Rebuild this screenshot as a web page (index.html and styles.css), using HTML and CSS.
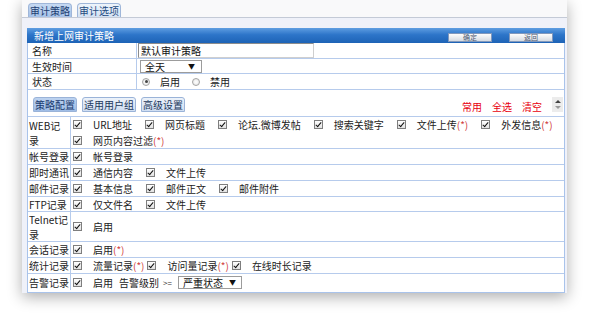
FILE: index.html
```html
<!DOCTYPE html>
<html lang="zh-CN">
<head>
<meta charset="utf-8">
<title>审计策略</title>
<link rel="stylesheet" href="styles.css">
</head>
<body>
<div class="stage">
  <div class="window">
    <div class="tabbar">
      <span class="tab active">审计策略</span>
      <span class="tab">审计选项</span>
    </div>
    <div class="panel">
      <div class="head">
        <span class="title">新增上网审计策略</span>
        <span class="btns"><span class="btn">确定</span><span class="btn">返回</span></span>
      </div>
      <div class="form">
        <div class="frow r1"><div class="flabel">名称</div><div class="fval"><span class="input">默认审计策略</span></div></div>
        <div class="frow r2"><div class="flabel">生效时间</div><div class="fval"><span class="select sel1"><span>全天</span><span class="arrow">▼</span></span></div></div>
        <div class="frow r3"><div class="flabel">状态</div><div class="fval">
          <span class="radio checked"></span><span class="rtext">启用</span>
          <span class="radio"></span><span class="rtext">禁用</span>
        </div></div>
      </div>
      <div class="subbar">
        <div class="subtabs">
          <span class="stab active">策略配置</span>
          <span class="stab">适用用户组</span>
          <span class="stab">高级设置</span>
        </div>
        <div class="links"><span>常用</span><span>全选</span><span>清空</span></div>
        <div class="spin"><span class="up"></span><span class="down"></span></div>
      </div>
      <div class="cfg">
        <div class="crow tall">
          <div class="clabel">WEB记录</div>
          <div class="cval">
            <div class="line">
              <span class="item"><span class="cb"></span>URL地址</span>
              <span class="item"><span class="cb"></span>网页标题</span>
              <span class="item"><span class="cb"></span>论坛.微博发帖</span>
              <span class="item"><span class="cb"></span>搜索关键字</span>
              <span class="item"><span class="cb"></span>文件上传<span class="star">(*)</span></span>
              <span class="item"><span class="cb"></span>外发信息<span class="star">(*)</span></span>
            </div>
            <div class="line">
              <span class="item"><span class="cb"></span>网页内容过滤<span class="star">(*)</span></span>
            </div>
          </div>
        </div>
        <div class="crow">
          <div class="clabel">帐号登录</div>
          <div class="cval"><div class="line"><span class="item"><span class="cb"></span>帐号登录</span></div></div>
        </div>
        <div class="crow">
          <div class="clabel">即时通讯</div>
          <div class="cval"><div class="line">
            <span class="item"><span class="cb"></span>通信内容</span>
            <span class="item"><span class="cb"></span>文件上传</span>
          </div></div>
        </div>
        <div class="crow">
          <div class="clabel">邮件记录</div>
          <div class="cval"><div class="line">
            <span class="item"><span class="cb"></span>基本信息</span>
            <span class="item"><span class="cb"></span>邮件正文</span>
            <span class="item"><span class="cb"></span>邮件附件</span>
          </div></div>
        </div>
        <div class="crow short">
          <div class="clabel">FTP记录</div>
          <div class="cval"><div class="line">
            <span class="item"><span class="cb"></span>仅文件名</span>
            <span class="item"><span class="cb"></span>文件上传</span>
          </div></div>
        </div>
        <div class="crow tel">
          <div class="clabel">Telnet记录</div>
          <div class="cval"><div class="line"><span class="item"><span class="cb"></span>启用</span></div></div>
        </div>
        <div class="crow">
          <div class="clabel">会话记录</div>
          <div class="cval"><div class="line"><span class="item"><span class="cb"></span>启用<span class="star">(*)</span></span></div></div>
        </div>
        <div class="crow">
          <div class="clabel">统计记录</div>
          <div class="cval"><div class="line tight">
            <span class="item"><span class="cb"></span>流量记录<span class="star">(*)</span></span>
            <span class="item"><span class="cb"></span>访问量记录<span class="star">(*)</span></span>
            <span class="item"><span class="cb"></span>在线时长记录</span>
          </div></div>
        </div>
        <div class="crow last">
          <div class="clabel">告警记录</div>
          <div class="cval"><div class="line">
            <span class="item alarm"><span class="cb"></span>启用</span>
            <span class="lvl">告警级别</span>
            <span class="ge">&gt;=</span>
            <span class="select sel2"><span>严重状态</span><span class="arrow">▼</span></span>
          </div></div>
        </div>
      </div>
    </div>
  </div>
</div>
</body>
</html>
```
FILE: styles.css
```css
* { box-sizing: border-box; }
html, body { margin: 0; padding: 0; }
body {
  width: 590px;
  height: 315px;
  overflow: hidden;
  background: #fff;
  font-family: "Noto Sans CJK SC", "Liberation Sans", sans-serif;
  font-size: 10px;
  line-height: 15px;
  color: #222;
}
.stage { display: flex; padding-left: 22px; height: 315px; }
.window {
  width: 545px;
  height: 293px;
  flex: none;
  background: #eff1f9;
  box-shadow: 0 4px 14px rgba(0, 0, 0, 0.32);
  display: flex;
  flex-direction: column;
}
.tabbar {
  height: 18px;
  flex: none;
  border-bottom: 1px solid #c4cad6;
  background: #f9f9fa;
  display: flex;
  align-items: flex-end;
  gap: 5px;
  padding-left: 6px;
}
.tab {
  height: 14px;
  padding: 0 1px;
  border: 1px solid #9fb6d9;
  border-bottom: none;
  border-radius: 4px 4px 0 0;
  background: linear-gradient(#eef4fb, #d3e1f3);
  color: #244a80;
  line-height: 13px;
}
.tab.active { background: linear-gradient(#c6d9f2, #a6c2e8); color: #1d3f73; }

.panel {
  margin: 10px 2px 0 5px;
  flex: 1;
  min-height: 0;
  background: #fff;
  border-left: 1px solid #a9c3ea;
  border-right: 1px solid #a9c3ea;
  border-bottom: 1px solid #a9c3ea;
  display: flex;
  flex-direction: column;
}
.head {
  height: 15px;
  flex: none;
  margin: 0 -1px;
  background: linear-gradient(#5e9de1, #2d75c9 45%, #1d63b6);
  display: flex;
  align-items: center;
  color: #fff;
  padding-left: 7px;
}
.title { flex: 1; line-height: 15px; }
.btns { display: flex; gap: 17px; margin-right: 12px; margin-top: 3px; }
.btn {
  width: 44px;
  height: 9px;
  border: 1px solid #8198bc;
  background: linear-gradient(#fdfdfd, #d6dbe2);
  font-size: 7px;
  line-height: 7px;
  text-align: center;
  color: #4d5870;
}

.frow { display: flex; border-bottom: 1px solid #b6cbec; }
.r1 { height: 16px; }
.r2 { height: 15px; }
.r3 { height: 16px; }
.flabel { width: 109px; flex: none; border-right: 1px solid #b6cbec; padding-left: 4px; line-height: 15px; }
.fval { flex: 1; min-width: 0; display: flex; align-items: center; padding-left: 1px; }
.input {
  width: 176px;
  height: 15px;
  border: 1px solid;
  border-color: #8c8c8c #cfcfcf #cfcfcf #8c8c8c;
  padding-left: 2px;
  line-height: 13px;
  color: #111;
}
.select {
  height: 13px;
  border: 1px solid #9c9c9c;
  display: flex;
  justify-content: space-between;
  align-items: center;
  line-height: 11px;
  background: #fff;
  color: #111;
}
.sel1 { width: 62px; margin-left: 2px; padding: 0 6px 0 4px; }
.arrow { font-size: 7px; color: #111; }
.radio {
  width: 8px;
  height: 8px;
  border: 1px solid #a4a4a4;
  border-radius: 50%;
  background: radial-gradient(#fff, #e2e2e2);
  margin-left: 4px;
  display: flex;
  align-items: center;
  justify-content: center;
}
.radio.checked::before {
  content: "";
  width: 3px;
  height: 3px;
  border-radius: 50%;
  background: #444;
}
.rtext { margin-left: 10px; margin-right: 8px; }

.subbar { height: 26px; flex: none; display: flex; align-items: flex-start; padding-top: 7px; }
.subtabs { display: flex; gap: 5px; margin-left: 5px; }
.stab {
  height: 15px;
  border: 1px solid #9ab3d8;
  border-radius: 3px 3px 0 0;
  background: linear-gradient(#ecf2fa, #cfdef2);
  padding: 0 1px;
  line-height: 13px;
  color: #22385c;
}
.stab.active { background: linear-gradient(#bcd2f0, #9fbde6); color: #1b3c70; }
.links {
  margin-left: auto;
  display: flex;
  gap: 10px;
  color: #e8000e;
  padding-top: 2px;
}
.spin {
  width: 11px;
  height: 15px;
  margin: 0 1px 0 10px;
  background: #ececec;
  display: flex;
  flex-direction: column;
  align-items: center;
  justify-content: center;
  gap: 3px;
}
.up { width: 0; height: 0; border-left: 3px solid transparent; border-right: 3px solid transparent; border-bottom: 3px solid #444; }
.down { width: 0; height: 0; border-left: 3px solid transparent; border-right: 3px solid transparent; border-top: 3px solid #9a9a9a; }

.cfg { border-top: 1px solid #b6cbec; }
.crow { display: flex; height: 16px; border-bottom: 1px solid #b6cbec; }
.crow.tall { height: 32px; }
.crow.short { height: 15px; }
.crow.tel { height: 30px; }
.crow.last { height: 16px; border-bottom: none; }
.clabel {
  width: 43px;
  flex: none;
  border-right: 1px solid #b6cbec;
  padding-left: 1px;
  line-height: 15px;
  display: flex;
  align-items: center;
}
.cval { flex: 1; min-width: 0; display: flex; flex-direction: column; justify-content: center; padding-left: 2px; }
.line { display: flex; align-items: center; height: 15px; }
.crow.tall .line { height: 16px; }
.item { display: flex; align-items: center; margin-right: 13px; white-space: nowrap; }
.tight .item { margin-right: 3px; }
.cb {
  width: 9px;
  height: 9px;
  border: 1px solid #7e7e7e;
  background: linear-gradient(#fff, #e2e2e2);
  margin-right: 11px;
  position: relative;
  flex: none;
}
.cb::after {
  content: "";
  position: absolute;
  left: 2px;
  top: 0;
  width: 2px;
  height: 5px;
  border: solid #111;
  border-width: 0 1.5px 1.5px 0;
  transform: rotate(40deg);
}
.star { color: #d04040; }
.item.alarm { margin-right: 6px; }
.lvl { margin-right: 4px; }
.ge { font-size: 8px; color: #333; margin-right: 6px; }
.sel2 { width: 64px; padding: 0 5px 0 4px; }
```
